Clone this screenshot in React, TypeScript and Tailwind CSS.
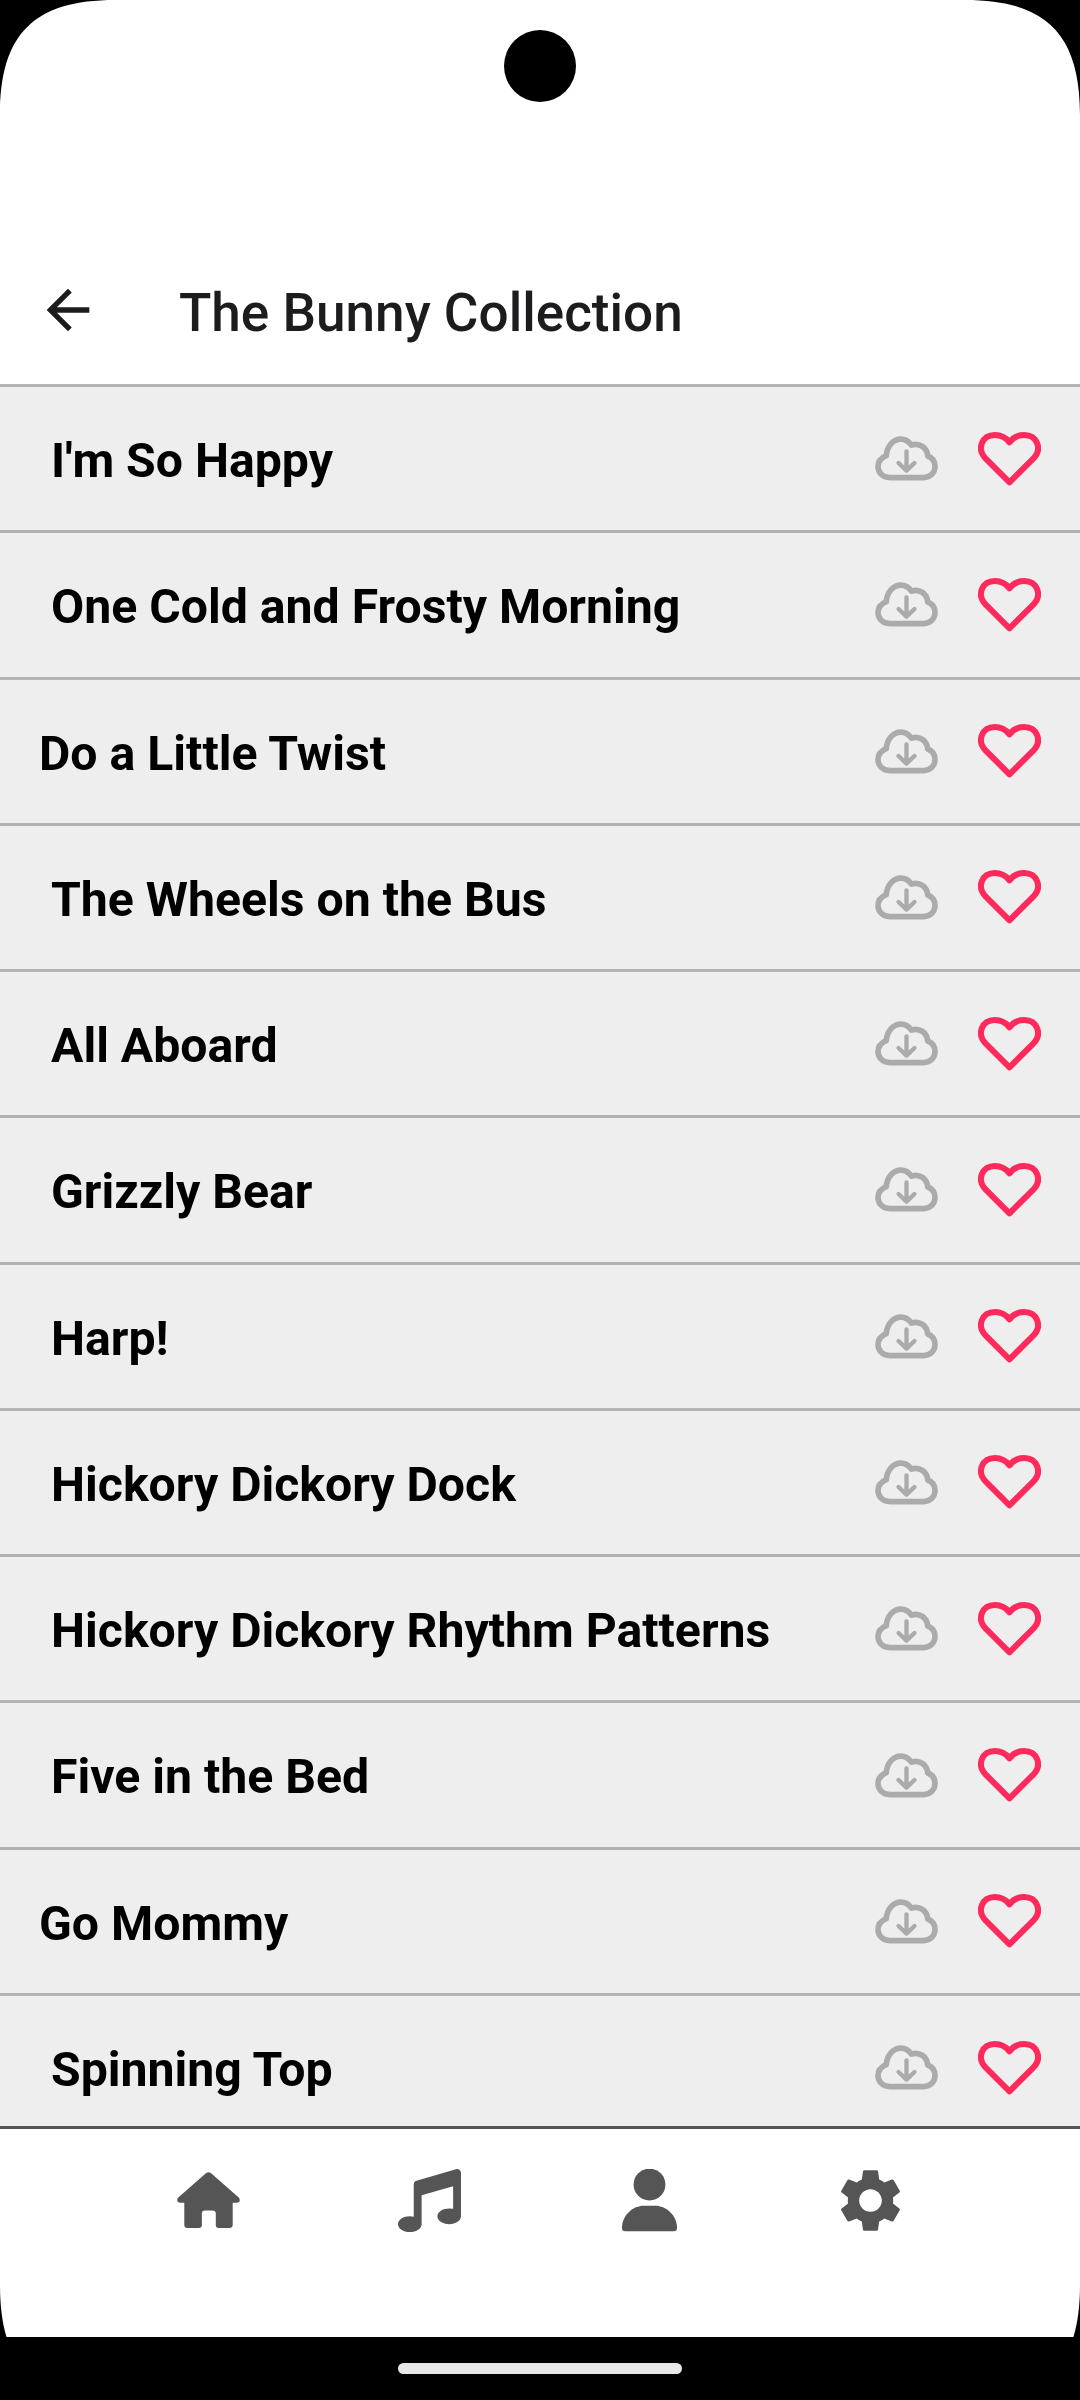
import { MdArrowBack } from "react-icons/md";
import { FaMusic } from "react-icons/fa";

const rows: [string, boolean][] = [
  ["I'm So Happy", true],
  ["One Cold and Frosty Morning", true],
  ["Do a Little Twist", false],
  ["The Wheels on the Bus", true],
  ["All Aboard", true],
  ["Grizzly Bear", true],
  ["Harp!", true],
  ["Hickory Dickory Dock", true],
  ["Hickory Dickory Rhythm Patterns", true],
  ["Five in the Bed", true],
  ["Go Mommy", false],
  ["Spinning Top", true],
];

function Cloud() {
  return (
    <svg viewBox="105 105 190 135" className="w-[63px] h-[45px] mr-[40px] shrink-0" fill="none" stroke="#ababab" strokeLinecap="round" strokeLinejoin="round">
      <path strokeWidth="17" d="M150 230 C125 230 114 212 114 197 C114 180 125 170 139 164 C141 135 160 114 183 114 C198 114 208 122 215 132 C240 124 262 140 264 165 C278 170 286 182 286 197 C286 215 272 230 252 230 Z" />
      <path strokeWidth="13" d="M200 151 L200 208 M176 186 L200 209 L224 186" />
    </svg>
  );
}

function Heart() {
  return (
    <svg viewBox="415 93 188 162" className="w-[63px] h-[54px] mr-[39px] shrink-0" fill="none" stroke="#ff2a5c" strokeWidth="18" strokeLinejoin="round">
      <path d="M509 244 L437 172 C410 144 426 102 465 102 C485 102 500 112 509 124 C518 112 533 102 553 102 C592 102 608 144 581 172 Z" />
    </svg>
  );
}

function Corner({ className }: { className: string }) {
  return (
    <svg viewBox="0 0 115 115" className={className}>
      <path d="M0 0 L115 0 C34 0 0 34 0 115 Z" fill="#000" />
    </svg>
  );
}

export default function App() {
  return (
    <div className="w-[1080px] h-[2400px] bg-black overflow-hidden flex flex-col relative" style={{ fontFamily: "Roboto, sans-serif" }}>
      <div className="h-[2337px] overflow-hidden shrink-0">
        <div className="h-[2400px] bg-white flex flex-col relative">
          <div className="h-[384px] shrink-0 flex items-start pt-[278px] pl-[36px]">
            <MdArrowBack className="w-[64px] h-[64px] text-[#1c1c1e] shrink-0" />
            <div className="ml-[79px] mt-[1px] text-[53.1px] leading-[68px] font-medium text-[#1c1c1e]">The Bunny Collection</div>
          </div>
          <div className="h-[1742px] shrink-0 overflow-hidden bg-[#eeeeee]">
            {rows.map(([t, indent]) => (
              <div key={t} className="h-[146.27px] border-t-[3px] border-[#b2b2b2] flex items-center">
                <div className={indent ? "pl-[51px] pt-[5px] flex-1 text-[48.2px] font-bold text-black" : "pl-[39px] pt-[5px] flex-1 text-[48.2px] font-bold text-black"}>{t}</div>
                <Cloud />
                <Heart />
              </div>
            ))}
          </div>
          <div className="border-t-[3px] border-[#555555] flex pl-[98px] pr-[99px] pt-[40px] text-[#555555]">
            <div className="flex-1 flex justify-center">
              <svg viewBox="80 87 190 190" className="w-[63px] h-[63px]" fill="currentColor">
                <path d="M168 99 Q175 94 182 99 L267 174 Q274 186 260 189 L248 189 L248 256 Q248 265 238 265 L206 265 Q197 265 197 256 L197 222 Q197 212 187 212 L165 212 Q155 212 155 222 L155 256 Q155 265 146 265 L112 265 Q102 265 102 256 L102 189 L90 189 Q76 186 83 174 Z" />
              </svg>
            </div>
            <div className="flex-1 flex justify-center"><FaMusic className="w-[63px] h-[63px]" /></div>
            <div className="flex-1 flex justify-center">
              <svg viewBox="53 87 190 190" className="w-[63px] h-[63px]" fill="currentColor">
                <circle cx="148" cy="134" r="48" />
                <path d="M65 265 C65 225 100 198 130 198 L166 198 C196 198 231 225 231 265 Q231 275 221 275 L75 275 Q65 275 65 265 Z" />
              </svg>
            </div>
            <div className="flex-1 flex justify-center">
              <svg viewBox="2 2 20 20" className="w-[63px] h-[63px]" fill="currentColor">
                <path d="M19.14 12.94c.04-.3.06-.61.06-.94 0-.32-.02-.64-.07-.94l2.03-1.58c.18-.14.23-.41.12-.61l-1.92-3.32c-.12-.22-.37-.29-.59-.22l-2.39.96c-.5-.38-1.03-.7-1.62-.94l-.36-2.54c-.04-.24-.24-.41-.48-.41h-3.84c-.24 0-.43.17-.47.41l-.36 2.54c-.59.24-1.13.57-1.62.94l-2.39-.96c-.22-.08-.47 0-.59.22L2.74 8.87c-.12.21-.08.47.12.61l2.03 1.58c-.05.3-.09.63-.09.94s.02.64.07.94l-2.03 1.58c-.18.14-.23.41-.12.61l1.92 3.32c.12.22.37.29.59.22l2.39-.96c.5.38 1.03.7 1.62.94l.36 2.54c.05.24.24.41.48.41h3.84c.24 0 .44-.17.47-.41l.36-2.54c.59-.24 1.13-.56 1.62-.94l2.39.96c.22.08.47 0 .59-.22l1.92-3.32c.12-.22.07-.47-.12-.61l-2.01-1.58zM12 15.6c-1.98 0-3.6-1.62-3.6-3.6s1.62-3.6 3.6-3.6 3.6 1.62 3.6 3.6-1.62 3.6-3.6 3.6z" />
              </svg>
            </div>
          </div>
          <Corner className="absolute left-0 top-0 w-[115px] h-[115px]" />
          <Corner className="absolute right-0 top-0 w-[115px] h-[115px] -scale-x-100" />
          <Corner className="absolute left-0 bottom-0 w-[115px] h-[115px] -scale-y-100" />
          <Corner className="absolute right-0 bottom-0 w-[115px] h-[115px] -scale-100" />
        </div>
      </div>
      <div className="flex-1 flex justify-center pt-[26px]">
        <div className="w-[284px] h-[11px] rounded-full bg-[#e8e8e8]" />
      </div>
      <div className="absolute left-[504px] top-[30px] w-[72px] h-[72px] rounded-full bg-black" />
    </div>
  );
}
